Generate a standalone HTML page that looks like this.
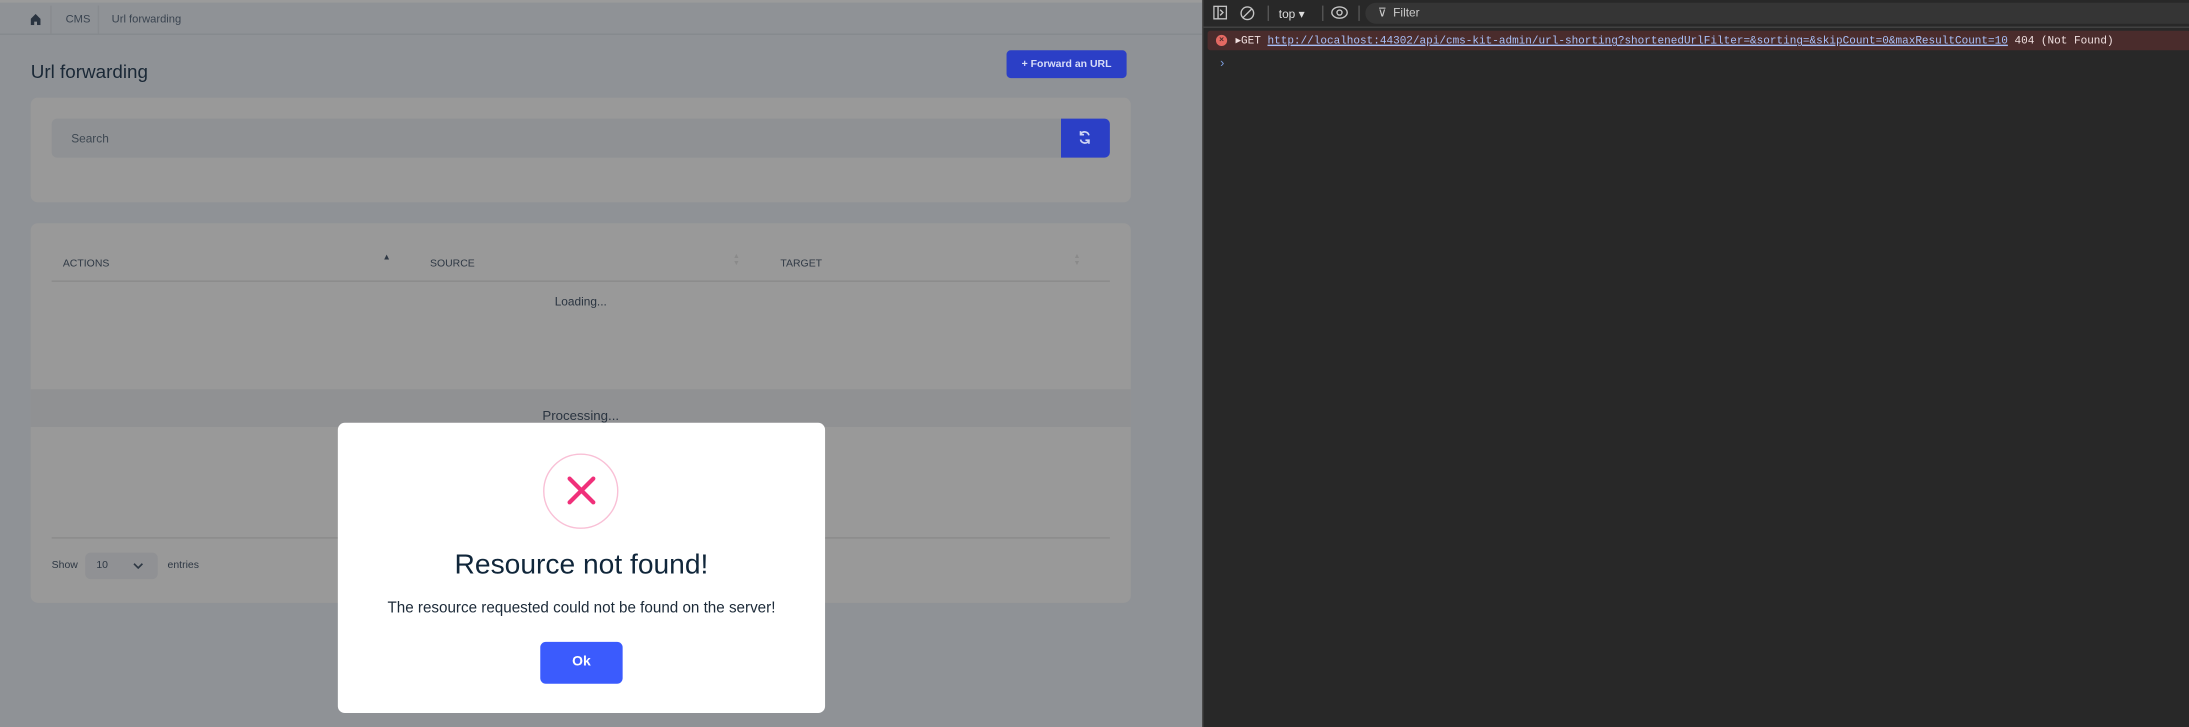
<!DOCTYPE html>
<html><head><meta charset="utf-8"><style>
html,body{margin:0;padding:0;width:2189px;height:727px;overflow:hidden;background:#282828}
#w{position:absolute;left:0;top:0;width:1568px;height:521px;transform:scale(1.39605,1.3954);transform-origin:0 0;font-family:"Liberation Sans",sans-serif}
.a{position:absolute}
#page{left:0;top:0;width:861px;height:521px;background:#8f9296;overflow:hidden}
.card{background:#999999;border-radius:5px}
.t{color:#2a3440}
#dev{left:861px;top:0;width:707px;height:521px;background:#282828;border-left:1px solid #4a4a4a}
.mono{font-family:"Liberation Mono",monospace;font-size:7.9px}
</style></head><body><div id="w">
<div id="page" class="a">
  <div class="a" style="left:0;top:0;width:861px;height:2px;background:#9b9b9b"></div>
  <div class="a" style="left:0;top:2px;width:861px;height:22px;background:#8f9296;border-bottom:1px solid #868a8e"></div>
  <svg class="a" style="left:22px;top:10px" width="7" height="8" viewBox="0 0 7 8"><path d="M3.5 0L7 3.5V8H4.5V5.5h-2V8H0V3.5z" fill="#2a3440"/></svg>
  <div class="a" style="left:36px;top:4px;width:1px;height:20px;background:#888b8f"></div>
  <div class="a t" style="left:47px;top:9px;font-size:8px;color:#3a4450">CMS</div>
  <div class="a" style="left:70px;top:4px;width:1px;height:20px;background:#888b8f"></div>
  <div class="a t" style="left:80px;top:9px;font-size:8px;color:#3a4450">Url forwarding</div>
  <div class="a" style="left:22px;top:44px;font-size:13.5px;color:#1a2836">Url forwarding</div>
  <div class="a" style="left:721px;top:36px;width:86px;height:20px;background:#2b3fc6;border-radius:3px;color:#d8def8;font-size:7.5px;font-weight:bold;line-height:20px;text-align:center">+ Forward an URL</div>
  <div class="a card" style="left:22px;top:70px;width:788px;height:75px"></div>
  <div class="a" style="left:37px;top:85px;width:723px;height:28px;background:#8f9194;border-radius:4px 0 0 4px"></div>
  <div class="a" style="left:51px;top:94px;font-size:8.5px;color:#3e4852">Search</div>
  <div class="a" style="left:760px;top:85px;width:35px;height:28px;background:#2b3fc6;border-radius:0 4px 4px 0"></div>
  <svg class="a" style="left:772px;top:93px" width="10" height="11" viewBox="0 0 10 11"><path d="M8 4A3.2 3.2 0 0 0 2.2 3M2 7A3.2 3.2 0 0 0 7.8 8" stroke="#d0d6f4" stroke-width="1.2" fill="none"/><path d="M2 1v2.5h2.5M8 10V7.5H5.5" stroke="#d0d6f4" stroke-width="1.2" fill="none"/></svg>
  <div class="a card" style="left:22px;top:160px;width:788px;height:272px"></div>
  <div class="a" style="left:45px;top:184px;font-size:7.5px;color:#2e3844">ACTIONS</div>
  <div class="a" style="left:274px;top:182px;font-size:6px;color:#2e3844">▲</div>
  <div class="a" style="left:308px;top:184px;font-size:7.5px;color:#2e3844">SOURCE</div>
  <div class="a" style="left:525px;top:182px;font-size:5px;line-height:5px;color:#8a8a8a">▲<br>▼</div>
  <div class="a" style="left:559px;top:184px;font-size:7.5px;color:#2e3844">TARGET</div>
  <div class="a" style="left:769px;top:182px;font-size:5px;line-height:5px;color:#8a8a8a">▲<br>▼</div>
  <div class="a" style="left:37px;top:201px;width:758px;height:1px;background:#8a8a8a"></div>
  <div class="a" style="left:0;width:832px;top:211px;text-align:center;font-size:8.5px;color:#2a3440">Loading...</div>
  <div class="a" style="left:22px;top:279px;width:788px;height:27px;background:#909193"></div>
  <div class="a" style="left:0;width:832px;top:293px;text-align:center;font-size:9.5px;color:#2a3440">Processing...</div>
  <div class="a" style="left:37px;top:385px;width:758px;height:1px;background:#8a8a8a"></div>
  <div class="a" style="left:37px;top:400px;font-size:7.5px;color:#2e3844">Show</div>
  <div class="a" style="left:61px;top:396px;width:52px;height:19px;background:#909194;border-radius:4px"></div>
  <div class="a" style="left:69px;top:400px;font-size:7.5px;color:#2e3844">10</div>
  <svg class="a" style="left:95px;top:403px" width="8" height="5" viewBox="0 0 8 5"><path d="M1 1l3 3 3-3" stroke="#2e3844" stroke-width="1.2" fill="none"/></svg>
  <div class="a" style="left:120px;top:400px;font-size:7.5px;color:#2e3844">entries</div>
  <div class="a" style="left:242px;top:303px;width:349px;height:208px;background:#fff;border-radius:5px"></div>
  <div class="a" style="left:389px;top:325px;width:52px;height:52px;border:1.5px solid #f9c0d6;border-radius:50%"></div>
  <svg class="a" style="left:403px;top:338px" width="27" height="27" viewBox="0 0 27 27"><path d="M5 5L22 22M22 5L5 22" stroke="#f0307a" stroke-width="3" stroke-linecap="round"/></svg>
  <div class="a" style="left:242px;width:349px;top:394px;text-align:center;font-size:20.2px;color:#10263a">Resource not found!</div>
  <div class="a" style="left:242px;width:349px;top:430px;text-align:center;font-size:10.9px;color:#1c2a38">The resource requested could not be found on the server!</div>
  <div class="a" style="left:387px;top:460px;width:59px;height:30px;background:#3b5bfd;border-radius:4px;color:#fff;font-weight:bold;font-size:10px;text-align:center;line-height:30px">Ok</div>
</div>
<div id="dev" class="a">
  <div class="a" style="left:0;top:0;width:707px;height:19px;border-bottom:1px solid #444"></div>
  <svg class="a" style="left:7px;top:4px" width="10" height="10" viewBox="0 0 10 10"><rect x="0.5" y="0.5" width="9" height="9" fill="none" stroke="#c4c4c4"/><path d="M3.5 0.5v9M5 3l2 2-2 2" stroke="#c4c4c4" fill="none"/></svg>
  <svg class="a" style="left:26px;top:4px" width="11" height="11" viewBox="0 0 11 11"><circle cx="5.5" cy="5.5" r="4.5" fill="none" stroke="#c4c4c4"/><path d="M2.5 8.5l6-6" stroke="#c4c4c4"/></svg>
  <div class="a" style="left:46px;top:4px;width:1px;height:11px;background:#555"></div>
  <div class="a" style="left:54px;top:5px;font-size:8.5px;color:#ddd">top ▾</div>
  <div class="a" style="left:85px;top:4px;width:1px;height:11px;background:#555"></div>
  <svg class="a" style="left:91px;top:4px" width="13" height="10" viewBox="0 0 13 10"><ellipse cx="6.5" cy="5" rx="5.5" ry="4" fill="none" stroke="#c4c4c4"/><circle cx="6.5" cy="5" r="1.8" fill="none" stroke="#c4c4c4"/></svg>
  <div class="a" style="left:111px;top:4px;width:1px;height:11px;background:#555"></div>
  <div class="a" style="left:116px;top:2px;width:591px;height:15px;background:#353535;border-radius:8px 0 0 8px"></div>
  <div class="a" style="left:125px;top:4px;font-size:8.5px;color:#ccc">⊽ &nbsp;Filter</div>
  <div class="a" style="left:3px;top:22px;width:704px;height:14px;background:#4a2c2c;border-radius:2px"></div>
  <div class="a" style="left:9px;top:25px;width:8px;height:8px;border-radius:50%;background:#e46962;color:#4a2c2c;font-size:6px;line-height:8px;text-align:center;font-weight:bold">×</div>
  <div class="a mono" style="left:23px;top:24px;color:#f0e0e0;white-space:nowrap">▸GET <span style="color:#a8c0f8;text-decoration:underline">http://localhost:44302/api/cms-kit-admin/url-shorting?shortenedUrlFilter=&amp;sorting=&amp;skipCount=0&amp;maxResultCount=10</span> 404 (Not Found)</div>
  <div class="a" style="left:12px;top:40px;font-size:9px;color:#7a9ad8">›</div>
</div>
</div></body></html>
